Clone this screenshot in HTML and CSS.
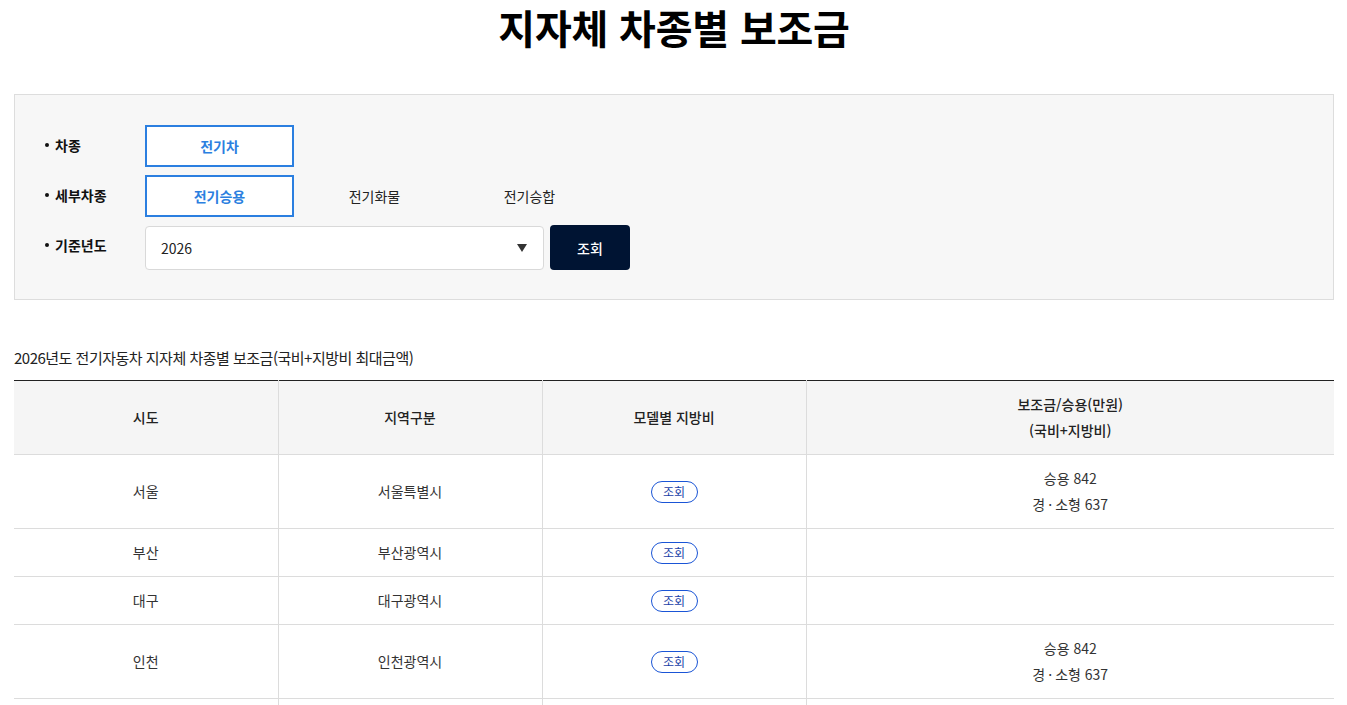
FILE: index.html
```html
<!DOCTYPE html>
<html lang="ko">
<head>
<meta charset="utf-8">
<title>지자체 차종별 보조금</title>
<link rel="stylesheet" href="styles.css">
</head>
<body>
<div class="page">
  <h1 class="title">지자체 차종별 보조금</h1>

  <div class="filter">
    <div class="frow">
      <div class="flabel">차종</div>
      <div class="opts">
        <button class="opt on">전기차</button>
      </div>
    </div>
    <div class="frow">
      <div class="flabel">세부차종</div>
      <div class="opts">
        <button class="opt on">전기승용</button>
        <button class="opt">전기화물</button>
        <button class="opt">전기승합</button>
      </div>
    </div>
    <div class="frow">
      <div class="flabel">기준년도</div>
      <div class="opts">
        <div class="select"><span>2026</span><span class="caret"></span></div>
        <button class="search">조회</button>
      </div>
    </div>
  </div>

  <p class="caption">2026년도 전기자동차 지자체 차종별 보조금(국비+지방비 최대금액)</p>

  <table class="tbl">
    <colgroup>
      <col class="c1"><col class="c2"><col class="c3"><col class="c4">
    </colgroup>
    <thead>
      <tr>
        <th>시도</th>
        <th>지역구분</th>
        <th>모델별 지방비</th>
        <th>보조금/승용(만원)<br>(국비+지방비)</th>
      </tr>
    </thead>
    <tbody>
      <tr>
        <td>서울</td>
        <td>서울특별시</td>
        <td><button class="pill">조회</button></td>
        <td>승용 842<br>경<span class="dot">·</span>소형 637</td>
      </tr>
      <tr>
        <td>부산</td>
        <td>부산광역시</td>
        <td><button class="pill">조회</button></td>
        <td></td>
      </tr>
      <tr>
        <td>대구</td>
        <td>대구광역시</td>
        <td><button class="pill">조회</button></td>
        <td></td>
      </tr>
      <tr>
        <td>인천</td>
        <td>인천광역시</td>
        <td><button class="pill">조회</button></td>
        <td>승용 842<br>경<span class="dot">·</span>소형 637</td>
      </tr>
      <tr>
        <td>광주</td>
        <td>광주광역시</td>
        <td><button class="pill">조회</button></td>
        <td>승용 842<br>경<span class="dot">·</span>소형 637</td>
      </tr>
    </tbody>
  </table>
</div>
</body>
</html>
```

FILE: styles.css
```css
* { box-sizing: border-box; }
html, body { margin: 0; padding: 0; background: #fff; }
body {
  font-family: "Noto Sans CJK KR", "Noto Sans", sans-serif;
  color: #333;
  font-size: 14px;
}
.page {
  padding: 0 13px 0 14px;
}
.title {
  margin: 0;
  height: 94px;
  padding-top: 2px;
  text-align: center;
  font-size: 40px;
  line-height: 50px;
  font-weight: 700;
  color: #000;
  letter-spacing: -0.2px;
}
.filter {
  background: #f7f7f7;
  border: 1px solid #dddddd;
  padding: 30px 30px 29px 30px;
  display: flex;
  flex-direction: column;
  gap: 8px;
}
.frow {
  display: flex;
  align-items: center;
}
.flabel {
  width: 100px;
  font-weight: 700;
  color: #111;
  font-size: 14px;
  display: flex;
  align-items: center;
  gap: 6px;
  align-self: flex-start;
  padding-top: 10px;
}
.flabel::before {
  content: "";
  width: 4px;
  height: 4px;
  border-radius: 50%;
  background: #111;
}
.opts {
  display: flex;
  gap: 6px;
  align-items: center;
}
.opt {
  width: 149px;
  height: 42px;
  border: 2px solid transparent;
  background: transparent;
  font-family: inherit;
  font-size: 14px;
  color: #222;
  padding: 0;
}
.opt.on {
  border-color: #2b7fe0;
  background: #fff;
  color: #2b7fe0;
  font-weight: 700;
}
.select {
  width: 399px;
  height: 44px;
  background: #fff;
  border: 1px solid #d9d9d9;
  border-radius: 4px;
  display: flex;
  align-items: center;
  justify-content: space-between;
  padding: 0 16px 0 15px;
  font-size: 14px;
  color: #222;
}
.caret {
  width: 0;
  height: 0;
  border-left: 5px solid transparent;
  border-right: 5px solid transparent;
  border-top: 8px solid #333;
}
.search {
  width: 80px;
  height: 45px;
  background: #001433;
  color: #fff;
  border: none;
  border-radius: 4px;
  font-family: inherit;
  font-size: 14px;
  font-weight: 500;
}
.caption {
  margin: 46px 0 0 0;
  font-size: 15px;
  line-height: 24px;
  color: #222;
  letter-spacing: -0.5px;
}
.tbl {
  margin-top: 10px;
  width: 100%;
  border-collapse: collapse;
  border-top: 1px solid #222;
  table-layout: fixed;
}
.c1, .c2, .c3 { width: 20%; }
.c4 { width: 40%; }
.tbl th {
  background: #f5f5f5;
  font-weight: 500;
  color: #222;
  font-size: 14px;
  line-height: 26px;
  border-bottom: 1px solid #dcdcdc;
  border-left: 1px solid #dcdcdc;
  padding: 10px 10px 11px;
}
.tbl td {
  text-align: center;
  font-size: 14px;
  line-height: 26px;
  padding: 10px 10px 11px;
  border-bottom: 1px solid #dcdcdc;
  border-left: 1px solid #dcdcdc;
  color: #333;
  vertical-align: middle;
}
.tbl th:first-child, .tbl td:first-child { border-left: none; }
.dot { margin: 0 3px; }
.pill {
  width: 47px;
  height: 22px;
  border: 1px solid #1a55d6;
  border-radius: 11px;
  background: #fff;
  color: #1a3fa8;
  font-family: inherit;
  font-size: 12px;
  line-height: 18px;
  padding: 0;
  vertical-align: top;
  margin-top: 3px;
}
```
